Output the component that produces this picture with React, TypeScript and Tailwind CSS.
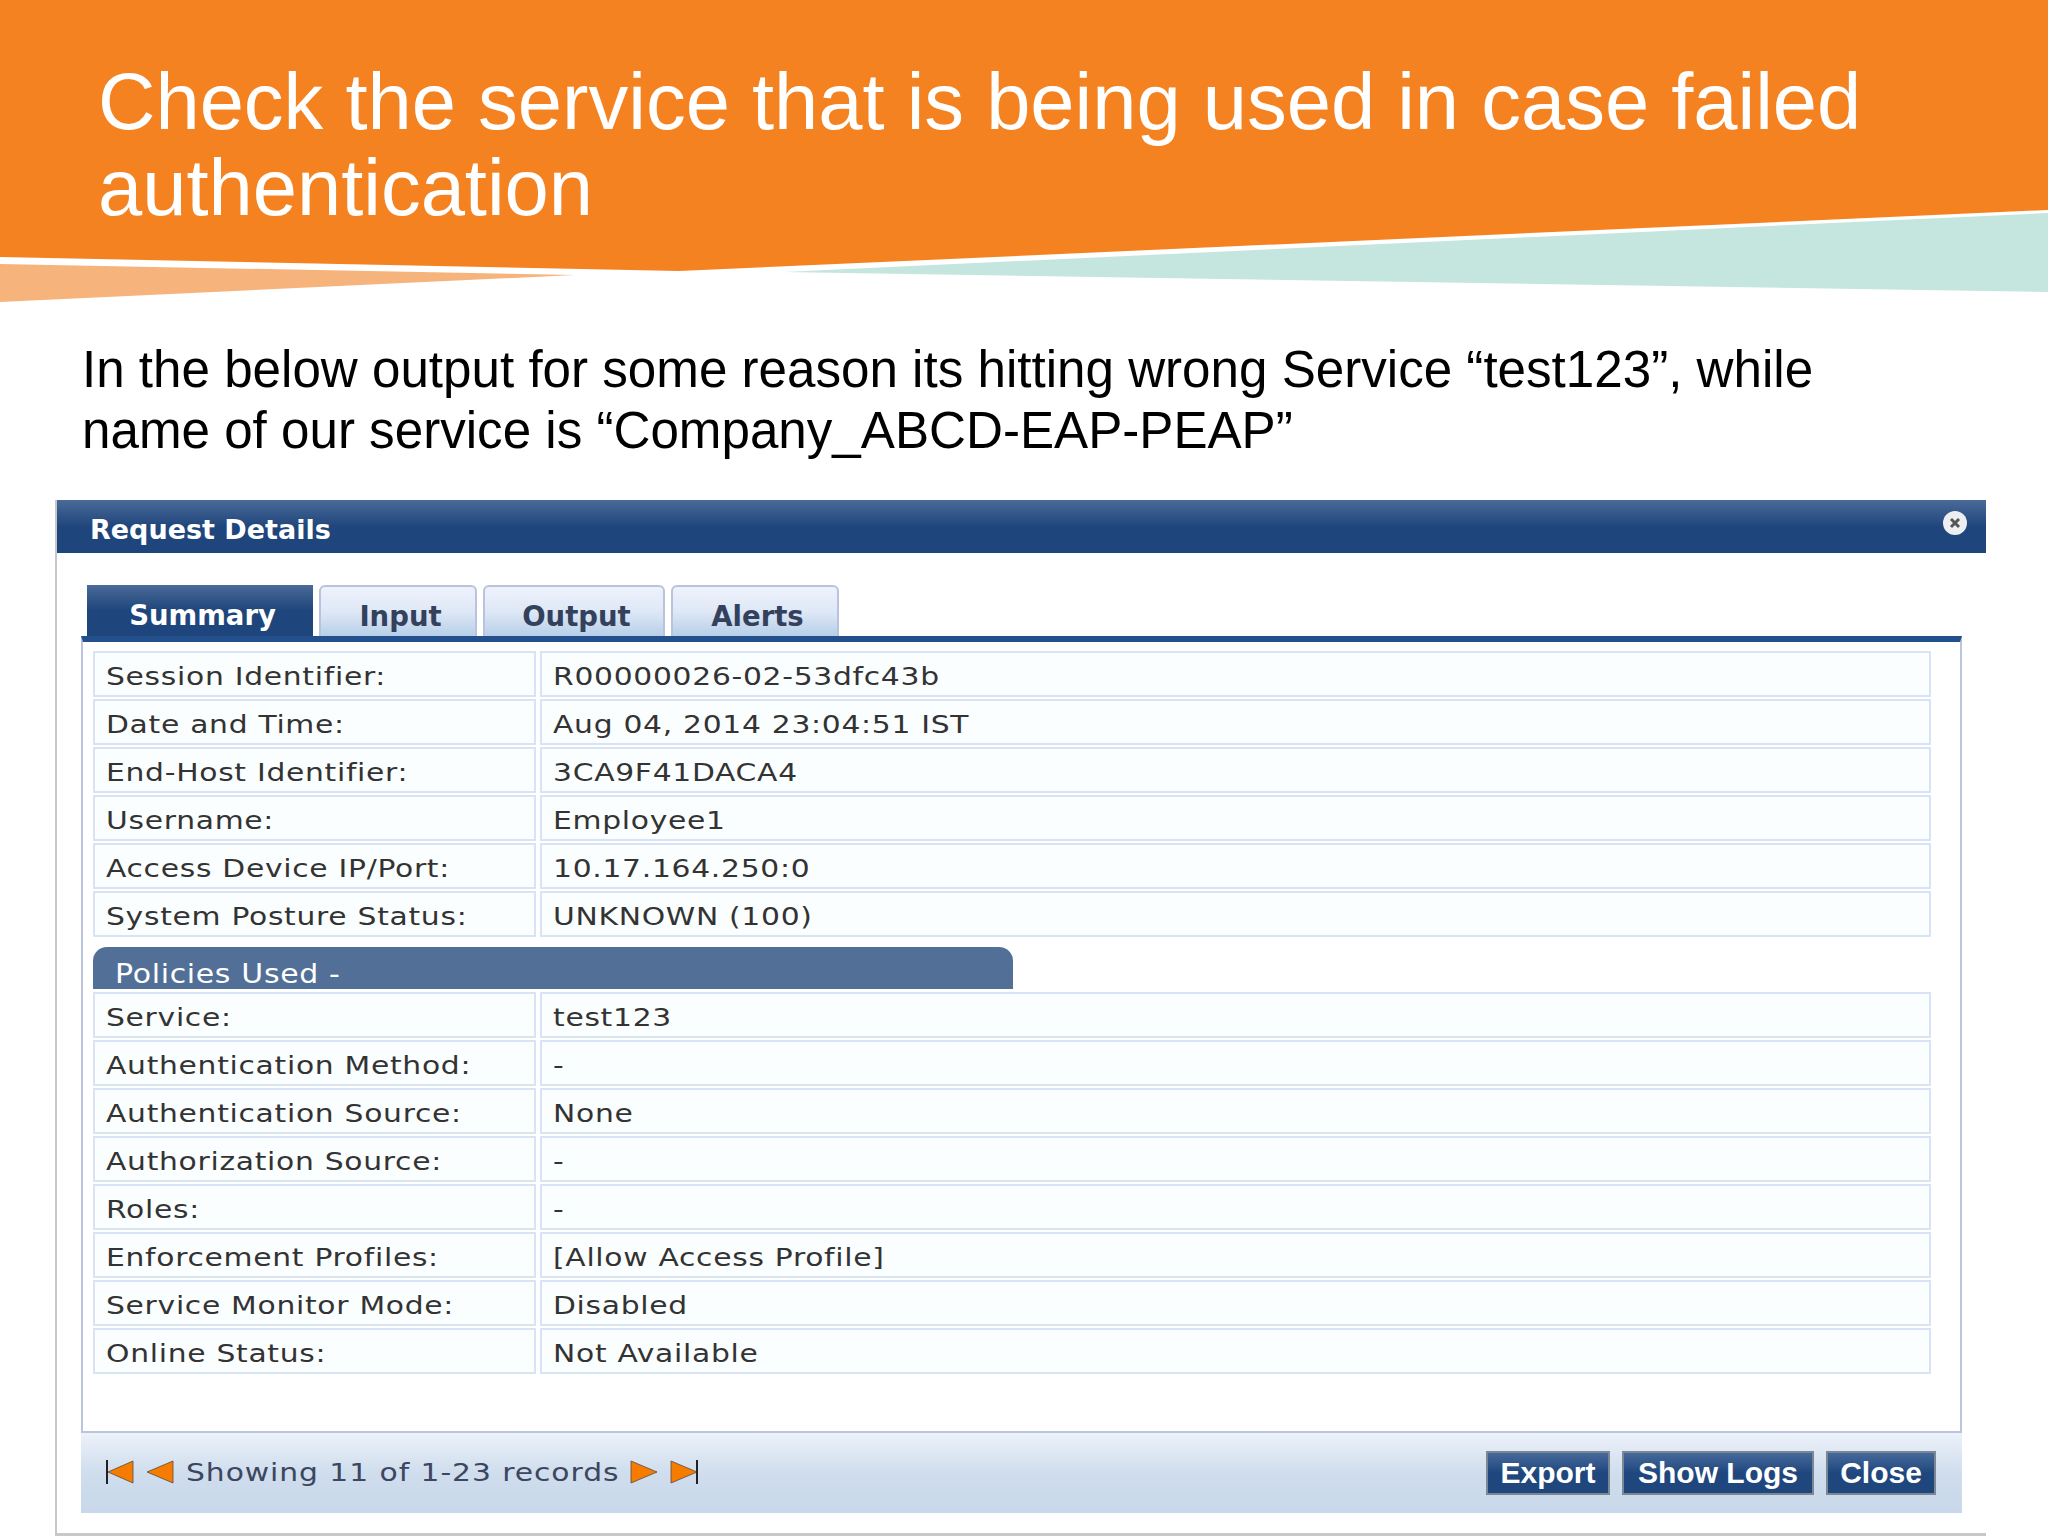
import React from "react";

const top = [
  ["Session Identifier:", "R00000026-02-53dfc43b"],
  ["Date and Time:", "Aug 04, 2014 23:04:51 IST"],
  ["End-Host Identifier:", "3CA9F41DACA4"],
  ["Username:", "Employee1"],
  ["Access Device IP/Port:", "10.17.164.250:0"],
  ["System Posture Status:", "UNKNOWN (100)"],
];
const policies = [
  ["Service:", "test123"],
  ["Authentication Method:", "-"],
  ["Authentication Source:", "None"],
  ["Authorization Source:", "-"],
  ["Roles:", "-"],
  ["Enforcement Profiles:", "[Allow Access Profile]"],
  ["Service Monitor Mode:", "Disabled"],
  ["Online Status:", "Not Available"],
];

function Wide({ children }: { children: React.ReactNode }) {
  return <span className="inline-block origin-left scale-x-[1.19] whitespace-nowrap">{children}</span>;
}

function Rows({ rows }: { rows: string[][] }) {
  return (
    <div className="flex flex-col gap-[2px]">
      {rows.map(([k, v]) => (
        <div key={k} className="flex gap-[4px] h-[46px] text-[25px] tracking-[0.6px] text-[#333]">
          <div className="w-[443px] flex items-center pl-[11px] pt-[6px] bg-[#fbfeff] border-2 border-[#d8e3f5]"><Wide>{k}</Wide></div>
          <div className="w-[1391px] flex items-center pl-[11px] pt-[6px] bg-[#fbfeff] border-2 border-[#d8e3f5]"><Wide>{v}</Wide></div>
        </div>
      ))}
    </div>
  );
}

function Tab({ label, w }: { label: string; w: string }) {
  return (
    <div className={`${w} h-[51px] flex items-center justify-center pt-[10px] pl-[5px] rounded-t-[6px] border-2 border-b-0 border-[#b9c3de] bg-gradient-to-b from-[#eef2fc] via-[#dfe8f6] to-[#b7cfe8] text-[27.5px] font-bold text-[#33415c]`}>
      {label}
    </div>
  );
}

function Btn({ label, w }: { label: string; w: string }) {
  return (
    <div className={`${w} h-[44px] flex items-center justify-center pb-[2px] border-2 border-[#7d8793] bg-gradient-to-b from-[#46699a] via-[#1f477e] to-[#1f477e] text-white font-bold text-[30px] [font-family:'Liberation_Sans',sans-serif]`}>
      {label}
    </div>
  );
}

function Arrow({ d, bar }: { d: string; bar?: number }) {
  return (
    <svg width="28" height="24" viewBox="0 0 28 24" className="shrink-0 -mt-[2px]">
      <polygon points={d} fill="#f57c00" stroke="#5a4a3a" strokeWidth="0.8" />
      {bar !== undefined && <line x1={bar} y1="0" x2={bar} y2="24" stroke="#222" strokeWidth="2" />}
    </svg>
  );
}

export default function App() {
  return (
    <div className="relative w-[2048px] h-[1536px] overflow-hidden bg-white [font-family:'DejaVu_Sans',sans-serif]">
      <div className="relative h-[302px] pt-[59px] pl-[98px]">
        <svg className="absolute left-0 top-0" width="2048" height="302" viewBox="0 0 2048 302">
          <polygon points="0,264 575,275 0,302" fill="#f6b47c" />
          <polygon points="784,272 2048,213 2048,292" fill="#c5e5df" />
          <polygon points="0,0 2048,0 2048,210 679,271 0,257" fill="#f58220" />
        </svg>
        <h1 className="relative text-[79.5px] leading-[86px] text-white font-normal [font-family:'Liberation_Sans',sans-serif]">
          Check the service that is being used in case failed<br />authentication
        </h1>
      </div>
      <p className="pl-[82px] mt-[37px] text-[51.15px] leading-[61px] text-black [font-family:'Liberation_Sans',sans-serif]">
        In the below output for some reason its hitting wrong Service “test123”, while<br />
        name of our service is “Company_ABCD-EAP-PEAP”
      </p>
      <div className="mt-[39px] ml-[55px] w-[1931px] h-[1036px] border-l-2 border-b-[3px] border-[#c8c8c8] flex flex-col">
        <div className="h-[53px] flex items-center justify-between pl-[33px] pr-[19px] bg-gradient-to-b from-[#4a6a98] via-[#1f467c] to-[#1f467c] text-white font-bold text-[27px]">
          <span className="pt-[7px]">Request Details</span>
          <svg width="24" height="24" viewBox="0 0 24 24" className="-mt-[8px]">
            <circle cx="12" cy="12" r="12" fill="#eceef2" />
            <path d="M8 8l8 8M16 8l-8 8" stroke="#555" strokeWidth="3" />
          </svg>
        </div>
        <div className="pl-[24px] pt-[32px] w-[1905px]">
          <div className="flex pl-[6px] gap-[6px] items-end">
            <div className="w-[226px] h-[51px] flex items-center justify-center pt-[10px] pl-[5px] bg-gradient-to-b from-[#4a6a98] via-[#1f467c] to-[#1f467c] text-white font-bold text-[27.5px]">Summary</div>
            <Tab label="Input" w="w-[158px]" />
            <Tab label="Output" w="w-[182px]" />
            <Tab label="Alerts" w="w-[168px]" />
          </div>
          <div className="h-[797px] border-t-[6px] border-t-[#23508c] border-x-2 border-b-2 border-x-[#bcc4e0] border-b-[#bcc4e0] pl-[10px] pt-[9px]">
            <Rows rows={top} />
            <div className="mt-[10px] mb-[3px] w-[920px] h-[42px] rounded-t-[14px] bg-[#527097] text-white text-[26px] tracking-[0.6px] pl-[22px] overflow-hidden flex items-end">
              <span className="inline-block origin-left scale-x-[1.15] whitespace-nowrap leading-[30px]">Policies Used -</span>
            </div>
            <Rows rows={policies} />
          </div>
          <div className="h-[80px] flex items-center justify-between pl-[25px] pr-[26px] bg-gradient-to-b from-[#edf2fa] via-[#cfdded] to-[#c8d8ea]">
            <div className="flex items-center gap-[12px] text-[25px] tracking-[0.8px] text-[#3c4660]">
              <Arrow d="2,12 27,1 27,23" bar={1} />
              <Arrow d="1,12 27,1 27,23" />
              <div className="w-[432px]"><Wide>Showing 11 of 1-23 records</Wide></div>
              <Arrow d="1,1 27,12 1,23" />
              <Arrow d="1,1 27,12 1,23" bar={27} />
            </div>
            <div className="flex gap-[12px]">
              <Btn label="Export" w="w-[124px]" />
              <Btn label="Show Logs" w="w-[192px]" />
              <Btn label="Close" w="w-[110px]" />
            </div>
          </div>
        </div>
      </div>
    </div>
  );
}
